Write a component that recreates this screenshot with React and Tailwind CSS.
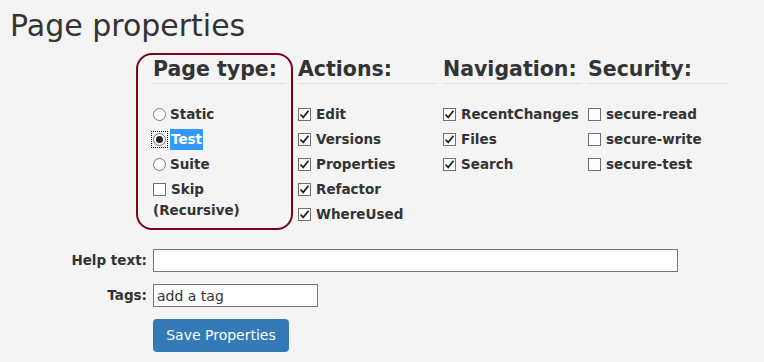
import React from "react";

const font = { fontFamily: '"DejaVu Sans", Verdana, sans-serif' };

function Box({ checked }) {
  return (
    <span className="inline-flex w-[13px] h-[13px] shrink-0 items-center justify-center border border-[#707070] bg-white mr-[5px]">
      {checked && (
        <svg width="11" height="11" viewBox="0 0 11 11">
          <path d="M1.5 5.5 L4.2 8.3 L9.5 1.8" fill="none" stroke="#222" strokeWidth="1.8" />
        </svg>
      )}
    </span>
  );
}

function Radio({ checked }) {
  return (
    <span
      className={
        "inline-flex shrink-0 mr-[4px] " +
        (checked ? "outline-1 outline-dotted outline-black outline-offset-[1px]" : "")
      }
    >
      <span className="inline-flex w-[13px] h-[13px] rounded-full border border-[#777] bg-white items-center justify-center">
        {checked && <span className="w-[7px] h-[7px] rounded-full bg-[#222]" />}
      </span>
    </span>
  );
}

function Heading({ children }) {
  return (
    <div className="text-[20.5px] font-bold leading-[22px] pb-[3px] border-b border-[#e0e0e0] mb-[20px] whitespace-nowrap">
      {children}
    </div>
  );
}

function Item({ children }) {
  return (
    <div className="flex items-center text-[13.5px] font-bold leading-[21px] h-[21px] mb-[4px] whitespace-nowrap">
      {children}
    </div>
  );
}

function CheckColumn({ title, items }) {
  return (
    <div className="w-[145px] pr-[6px] pt-[5px]">
      <Heading>{title}</Heading>
      {items.map(([label, checked]) => (
        <Item key={label}>
          <Box checked={checked} />
          {label}
        </Item>
      ))}
    </div>
  );
}

export default function App() {
  return (
    <div className="min-h-[362px] bg-[#f4f4f4] text-[#333] px-[10px]" style={font}>
      <h1 className="text-[30px] leading-[34px] pt-[9px] font-normal">Page properties</h1>

      <div className="flex ml-[126px] mt-[10px]">
        <div className="w-[157px] h-[177px] border-2 border-[#7f0019] rounded-[16px] pl-[15px] pr-[5px] pt-[3px] mr-[5px]">
          <Heading>Page type:</Heading>
          <Item>
            <Radio />
            Static
          </Item>
          <Item>
            <Radio checked />
            <span className="bg-[#3399ff] text-white px-[1px]">Test</span>
          </Item>
          <Item>
            <Radio />
            Suite
          </Item>
          <div className="text-[13.5px] font-bold leading-[21px]">
            <div className="flex items-center">
              <Box />
              Skip
            </div>
            <div>(Recursive)</div>
          </div>
        </div>

        <CheckColumn
          title="Actions:"
          items={[["Edit", true], ["Versions", true], ["Properties", true], ["Refactor", true], ["WhereUsed", true]]}
        />
        <CheckColumn title="Navigation:" items={[["RecentChanges", true], ["Files", true], ["Search", true]]} />
        <CheckColumn title="Security:" items={[["secure-read", false], ["secure-write", false], ["secure-test", false]]} />
      </div>

      <div className="grid grid-cols-[137px_1fr] gap-x-[6px] gap-y-[12px] mt-[19px] items-center">
        <label className="text-right text-[13.5px] font-bold">Help text:</label>
        <input className="w-[525px] h-[23px] border border-[#767676] bg-white" />
        <label className="text-right text-[13.5px] font-bold">Tags:</label>
        <input
          defaultValue="add a tag"
          className="w-[165px] h-[23px] border border-[#767676] bg-white px-[3px] text-[14px] text-[#333] outline-none"
        />
        <div />
        <button className="w-[136px] h-[33px] rounded-[4px] bg-[#337ab7] text-white text-[14px]">Save Properties</button>
      </div>
    </div>
  );
}
